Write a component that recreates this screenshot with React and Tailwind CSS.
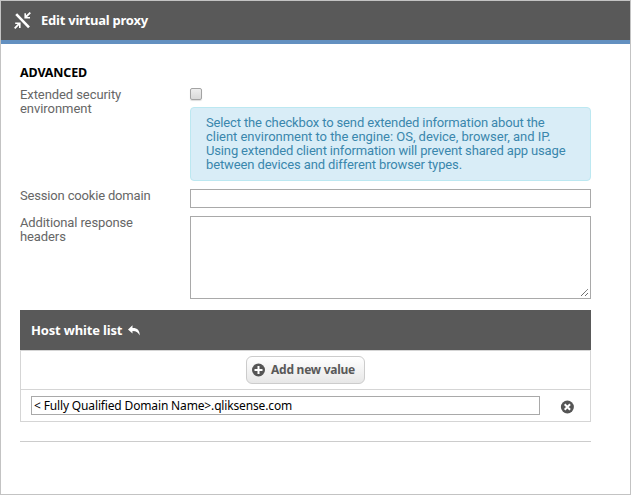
import React from "react";

function Lines({ items }) {
  return items.map(([text, spacing]) => (
    <span key={text} className="block whitespace-nowrap" style={{ letterSpacing: spacing }}>
      {text}
    </span>
  ));
}

function ProxyIcon() {
  return (
    <svg width="17" height="17" viewBox="0 0 17 17" fill="none" stroke="#fff" className="mt-[-1px] shrink-0">
      <path d="M2.2 2.2 15 15.3" strokeWidth="2.6" />
      <path d="M16.3 .7 11.8 5M.7 16.3 5 11.8" strokeWidth="1.8" />
      <path d="M11.2 1.2v4.6H16M1.2 11.2h4.6V16" strokeWidth="1.6" />
    </svg>
  );
}

export default function App() {
  return (
    <div className="flex h-[495px] w-[631px] flex-col overflow-hidden border border-[#c3c3c3] bg-white font-['Roboto',sans-serif] text-[13px] leading-[14px] text-[#666]">
      <header className="flex h-[43px] shrink-0 items-center border-b-4 border-[#6390c0] bg-[#595959] pl-[13px] text-white">
        <ProxyIcon />
        <h1 className="ml-[10px] mt-[-2px] whitespace-nowrap font-['Noto_Sans',sans-serif] text-[13px] font-bold tracking-[-0.24px]">Edit virtual proxy</h1>
      </header>

      <main className="ml-[19px] w-[571px] pt-[22px]">
        <h2 className="h-[21px] font-['Noto_Sans',sans-serif] text-[12.5px] font-bold tracking-[-0.15px] text-black">ADVANCED</h2>

        <section className="flex h-[102px]">
          <div className="w-[170px] pt-[1px]">
            <Lines items={[["Extended security", "-0.08px"], ["environment", "-0.05px"]]} />
          </div>
          <div className="w-[401px] pt-[1px]">
            <div className="h-3 w-3 rounded-[2px] border border-[#a3a3a3] bg-linear-to-b from-[#eee] to-[#d9d9d9] shadow-[0_1px_1px_#ddd]" />
            <div className="mt-[7px] h-[74px] rounded-[4px] border border-[#bce8f1] bg-[#d9edf7] pl-[15px] pt-[8px] text-[#3a87ad]">
              <Lines
                items={[
                  ["Select the checkbox to send extended information about the", "-0.14px"],
                  ["client environment to the engine: OS, device, browser, and IP.", "-0.03px"],
                  ["Using extended client information will prevent shared app usage", "-0.15px"],
                  ["between devices and different browser types.", "-0.12px"],
                ]}
              />
            </div>
          </div>
        </section>

        <section className="flex h-[27px]">
          <div className="w-[170px]">
            <Lines items={[["Session cookie domain", "-0.17px"]]} />
          </div>
          <div className="h-[19px] w-[401px] border border-[#a9a9a9]" />
        </section>

        <section className="flex h-[94px]">
          <div className="w-[170px]">
            <Lines items={[["Additional response", "-0.12px"], ["headers", "-0.1px"]]} />
          </div>
          <div className="flex h-[83px] w-[401px] items-end justify-end border border-[#a9a9a9] p-px">
            <svg width="9" height="9" viewBox="0 0 9 9" stroke="#555" strokeWidth="1" strokeDasharray="1.2 .3">
              <path d="M1 8 8 1M5 8l3-3" />
            </svg>
          </div>
        </section>

        <section>
          <div className="flex h-10 items-center bg-[#595959] pl-[11px] text-white">
            <h3 className="whitespace-nowrap font-['Noto_Sans',sans-serif] text-[13px] font-bold tracking-[-0.17px]">Host white list</h3>
            <svg width="12" height="11" viewBox="0 0 12 11" className="ml-[6px] mt-px" fill="#fff">
              <path d="M0 4.4 4.5.3v2.8C8.8 2.8 11.9 5.2 11.7 10.6 10.5 7.5 8.5 5.9 4.5 5.9v2.7z" />
            </svg>
          </div>
          <div className="flex h-10 items-center justify-center border border-[#d5d5d5]">
            <div className="flex h-7 w-[119px] items-center rounded-[6px] border border-[#ccc] bg-linear-to-b from-white to-[#e7e7e7] pl-[5px]">
              <svg width="14" height="14" viewBox="0 0 14 14" className="mr-[5px] shrink-0">
                <circle cx="6.5" cy="7" r="6.5" fill="#555" />
                <path d="M6.5 3v8M2.5 7h8" stroke="#fff" strokeWidth="2" />
              </svg>
              <span className="whitespace-nowrap font-['Noto_Sans',sans-serif] text-xs font-bold tracking-[-0.25px] text-[#595959]">Add new value</span>
            </div>
          </div>
          <div className="flex h-8 items-center border border-t-0 border-[#d5d5d5] pl-[10px]">
            <div className="flex h-[19px] w-[509px] items-center border border-[#a9a9a9] pl-[2px] text-black">
              <span className="whitespace-nowrap font-['Noto_Sans',sans-serif] text-xs tracking-[-0.15px]">&lt; Fully Qualified Domain Name&gt;.qliksense.com</span>
            </div>
            <svg width="14" height="14" viewBox="0 0 14 14" className="ml-[20px] mt-[3px]">
              <circle cx="7.4" cy="7" r="6.5" fill="#555" />
              <path d="m4.7 4.3 5.4 5.4M10.1 4.3 4.7 9.7" stroke="#fff" strokeWidth="2" />
            </svg>
          </div>
        </section>
        <hr className="mt-[19px] border-[#ccc]" />
      </main>
    </div>
  );
}
